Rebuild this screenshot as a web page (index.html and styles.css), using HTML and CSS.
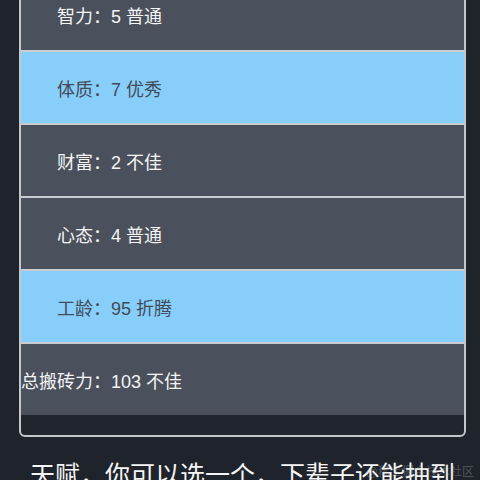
FILE: index.html
```html
<!DOCTYPE html>
<html lang="zh-CN">
<head>
  <meta charset="UTF-8">
  <meta name="viewport" content="width=device-width, initial-scale=1.0">
  <title>人生重开 - 属性</title>
  <link rel="stylesheet" href="styles.css">
</head>
<body>
  <div class="property-list">
    <div class="property-item">
      <span class="label">智力：</span><span class="value">5 普通</span>
    </div>
    <div class="property-item good">
      <span class="label">体质：</span><span class="value">7 优秀</span>
    </div>
    <div class="property-item">
      <span class="label">财富：</span><span class="value">2 不佳</span>
    </div>
    <div class="property-item">
      <span class="label">心态：</span><span class="value">4 普通</span>
    </div>
    <div class="property-item good">
      <span class="label">工龄：</span><span class="value">95 折腾</span>
    </div>
    <div class="property-item">
      <span class="label">总搬砖力：</span><span class="value">103 不佳</span>
    </div>
  </div>

  <h2 class="talent-title">天赋，你可以选一个，下辈子还能抽到</h2>

  <div class="watermark">@稀土掘金技术社区</div>
</body>
</html>
```

FILE: styles.css
```css
body {
  margin: 0;
  padding: 0;
  background-color: #1f232b; /* dark page */
  font-family: "Liberation Sans", "Noto Sans CJK SC", sans-serif;
  color: #f2f2f2;
  overflow: hidden;
  height: 480px;
  position: relative;
}

.property-list {
  margin: -23px 14px 0 19px; /* list is scrolled, top row half hidden */
  border: 2px solid #c3c7cc;
  border-radius: 6px;
  padding-bottom: 20px;
  background-color: #21252d;
}

.property-item {
  height: 71px;
  display: flex;
  align-items: center;
  font-size: 18px;
  background-color: #4a505c;
  color: #f4f4f4;
  border-bottom: 2px solid #c9cdd2;
}

.property-item:last-child {
  border-bottom: none;
  height: 71px;
}

.property-item.good {
  background-color: #87cefa; /* lightskyblue */
  color: #434b58;
}

.label {
  width: 90px;
  flex-shrink: 0;
  display: flex;
  justify-content: flex-end;
  white-space: nowrap;
}

.value {
  white-space: pre;
}

.talent-title {
  margin: 18px 0 0 30px;
  font-size: 25px;
  font-weight: normal;
  color: #f5f5f5;
  white-space: nowrap;
}

.watermark {
  position: absolute;
  right: 6px;
  bottom: 1px;
  font-size: 12px;
  color: rgba(200, 205, 212, 0.3);
}
```
